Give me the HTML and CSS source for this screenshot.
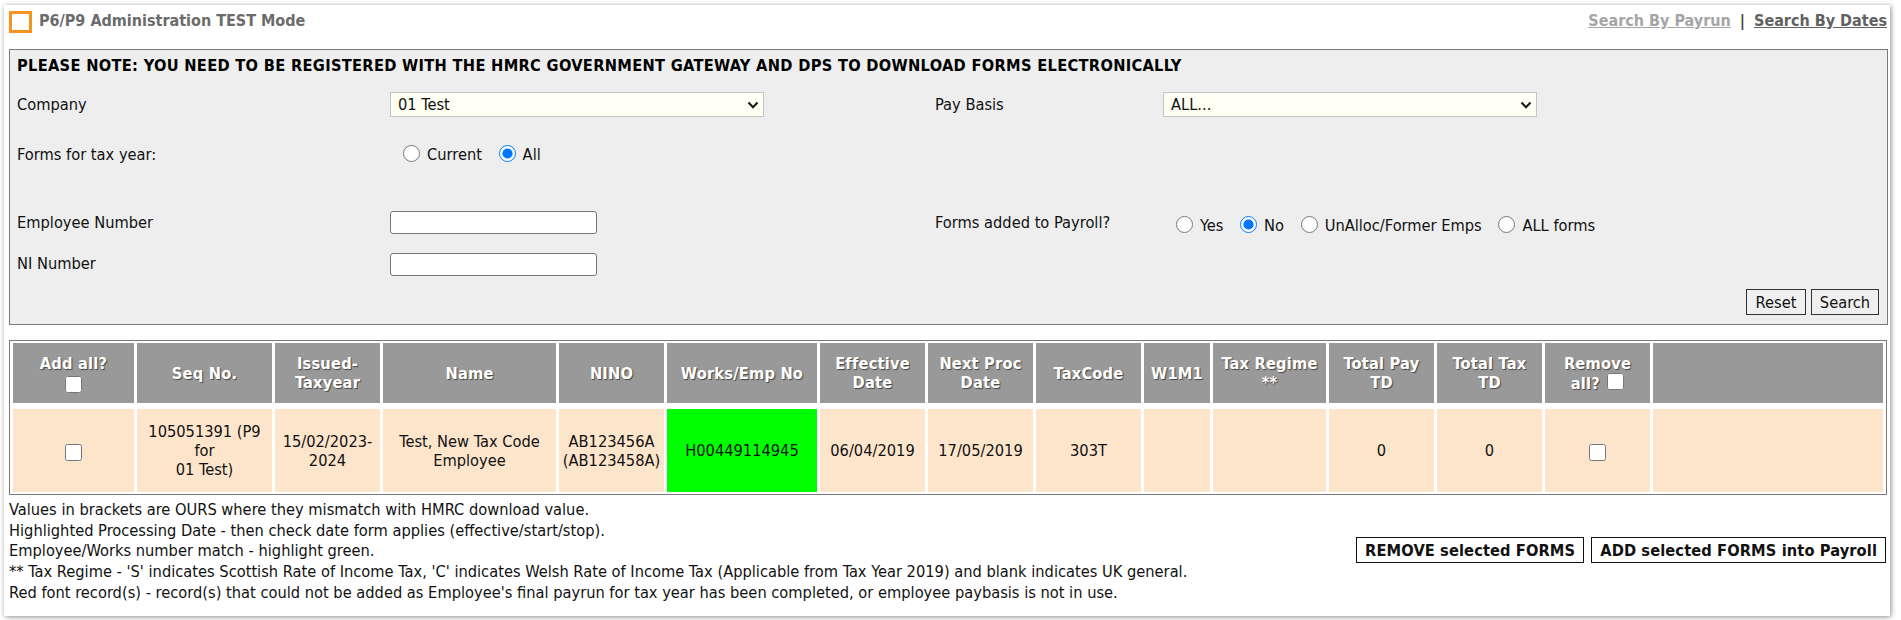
FILE: index.html
```html
<!DOCTYPE html>
<html lang="en">
<head>
<meta charset="utf-8">
<title>P6/P9 Administration TEST Mode</title>
<link rel="stylesheet" href="styles.css">
</head>
<body>
<div class="panel">
  <div class="top">
    <span class="logo-box"></span>
    <h1 class="title">P6/P9 Administration TEST Mode</h1>
    <nav class="links">
      <a href="#" class="link link-muted">Search By Payrun</a>
      <span class="sep">|</span>
      <a href="#" class="link link-dark">Search By Dates</a>
    </nav>
  </div>

  <div class="criteria">
    <p class="notice">PLEASE NOTE: YOU NEED TO BE REGISTERED WITH THE HMRC GOVERNMENT GATEWAY AND DPS TO DOWNLOAD FORMS ELECTRONICALLY</p>

    <div class="frow r-company">
      <span class="flabel">Company</span>
      <div class="fctl">
        <div class="selwrap">
          <select class="fselect"><option>01 Test</option></select>
          <svg class="chev" viewBox="0 0 12 8" width="12" height="8"><polyline points="1.5,1.5 6,6.2 10.5,1.5" fill="none" stroke="#1a1a1a" stroke-width="2.1"/></svg>
        </div>
      </div>
      <span class="flabel">Pay Basis</span>
      <div class="fctl">
        <div class="selwrap">
          <select class="fselect"><option>ALL...</option></select>
          <svg class="chev" viewBox="0 0 12 8" width="12" height="8"><polyline points="1.5,1.5 6,6.2 10.5,1.5" fill="none" stroke="#1a1a1a" stroke-width="2.1"/></svg>
        </div>
      </div>
    </div>

    <div class="frow r-year">
      <span class="flabel">Forms for tax year:</span>
      <div class="fctl radios">
        <label class="opt"><input type="radio" name="year" class="rad">Current</label>
        <label class="opt"><input type="radio" name="year" class="rad" checked>All</label>
      </div>
    </div>

    <div class="frow r-emp">
      <span class="flabel">Employee Number</span>
      <div class="fctl"><input type="text" class="ftext"></div>
      <span class="flabel">Forms added to Payroll?</span>
      <div class="fctl radios radios-low">
        <label class="opt"><input type="radio" name="added" class="rad">Yes</label>
        <label class="opt"><input type="radio" name="added" class="rad" checked>No</label>
        <label class="opt"><input type="radio" name="added" class="rad">UnAlloc/Former Emps</label>
        <label class="opt"><input type="radio" name="added" class="rad">ALL forms</label>
      </div>
    </div>

    <div class="frow r-ni">
      <span class="flabel">NI Number</span>
      <div class="fctl"><input type="text" class="ftext"></div>
    </div>

    <div class="actions">
      <button class="btn">Reset</button>
      <button class="btn">Search</button>
    </div>
  </div>

  <div class="results">
    <table class="grid">
      <thead>
        <tr>
          <th class="c-add">Add all?<br><input type="checkbox" class="chk"></th>
          <th class="c-seq">Seq No.</th>
          <th class="c-std">Issued-<br>Taxyear</th>
          <th class="c-name">Name</th>
          <th class="c-std">NINO</th>
          <th class="c-works">Works/Emp No</th>
          <th class="c-std">Effective<br>Date</th>
          <th class="c-std">Next Proc<br>Date</th>
          <th class="c-std">TaxCode</th>
          <th class="c-w1">W1M1</th>
          <th class="c-reg">Tax Regime<br>**</th>
          <th class="c-std">Total Pay<br>TD</th>
          <th class="c-std">Total Tax<br>TD</th>
          <th class="c-std">Remove<br>all? <input type="checkbox" class="chk chk-inline"></th>
          <th class="c-last"></th>
        </tr>
      </thead>
      <tbody>
        <tr>
          <td><input type="checkbox" class="chk"></td>
          <td>105051391 (P9<br>for<br>01 Test)</td>
          <td>15/02/2023-<br>2024</td>
          <td>Test, New Tax Code<br>Employee</td>
          <td>AB123456A<br>(AB123458A)</td>
          <td class="match">H00449114945</td>
          <td>06/04/2019</td>
          <td>17/05/2019</td>
          <td>303T</td>
          <td></td>
          <td></td>
          <td>0</td>
          <td>0</td>
          <td><input type="checkbox" class="chk"></td>
          <td></td>
        </tr>
      </tbody>
    </table>
  </div>

  <div class="footer">
    <div class="notes">
      <p>Values in brackets are OURS where they mismatch with HMRC download value.</p>
      <p>Highlighted Processing Date - then check date form applies (effective/start/stop).</p>
      <p>Employee/Works number match - highlight green.</p>
      <p>** Tax Regime - 'S' indicates Scottish Rate of Income Tax, 'C' indicates Welsh Rate of Income Tax (Applicable from Tax Year 2019) and blank indicates UK general.</p>
      <p>Red font record(s) - record(s) that could not be added as Employee's final payrun for tax year has been completed, or employee paybasis is not in use.</p>
    </div>
    <div class="footer-actions">
      <button class="btn btn-strong">REMOVE selected FORMS</button>
      <button class="btn btn-strong">ADD selected FORMS into Payroll</button>
    </div>
  </div>
</div>
</body>
</html>
```

FILE: styles.css
```css
* { box-sizing: border-box; }

html, body {
  margin: 0;
  padding: 0;
  background: #ffffff;
}

body {
  font-family: "DejaVu Sans Condensed", "DejaVu Sans", sans-serif;
  font-stretch: condensed;
  font-size: 16.3px;
  color: #111;
}

.panel {
  margin: 5px 11px 4px 4px;
  height: 611px;
  padding: 0 2px 0 5px;
  background: #fff;
  box-shadow: 1px 1px 5px rgba(0, 0, 0, 0.45);
}

/* ---------- title bar ---------- */
.top {
  height: 44px;
  display: flex;
  align-items: flex-start;
  padding-top: 6px;
}

.logo-box {
  width: 23px;
  height: 22px;
  border: 3px solid #f7931e;
  flex: none;
}

.title {
  margin: 0 0 0 7px;
  font-size: 16px;
  line-height: 20px;
  font-weight: bold;
  color: #6b6b6b;
}

.links {
  margin-left: auto;
  display: flex;
  gap: 9px;
  font-size: 16px;
  font-weight: bold;
  line-height: 20px;
  padding-right: 1px;
}

.link { text-decoration: underline; }
.link-muted { color: #a5a5a5; }
.link-dark { color: #616161; }
.sep { color: #444; }

/* ---------- criteria ---------- */
.criteria {
  border: 1px solid #7a7a7a;
  background: #eeeeee;
  padding: 6px 7px 9px 7px;
}

.notice {
  margin: 0;
  font-weight: bold;
  line-height: 20px;
  letter-spacing: 0.3px;
  color: #000;
}

.frow {
  display: grid;
  grid-template-columns: 373px 545px 228px 1fr;
  align-items: center;
}

.r-company { margin-top: 16px; height: 25px; }
.r-year { margin-top: 28px; height: 20px; }
.r-emp { margin-top: 43px; height: 29px; }
.r-ni { margin-top: 13px; height: 28px; }

.flabel { color: #111; line-height: 20px; }

.selwrap {
  position: relative;
  width: 374px;
  height: 25px;
}

.fselect {
  appearance: none;
  -webkit-appearance: none;
  width: 100%;
  height: 100%;
  margin: 0;
  padding: 0 0 0 7px;
  border: 1px solid #c4c4c4;
  border-radius: 0;
  background: #fffff4;
  font: inherit;
  color: #111;
}

.chev {
  position: absolute;
  right: 5px;
  top: 9px;
  pointer-events: none;
}

.ftext {
  width: 207px;
  height: 100%;
  margin: 0;
  border: 1px solid #767676;
  border-radius: 3px;
  background: #fff;
  font: inherit;
}

.radios {
  padding-left: 8px;
  line-height: 20px;
  white-space: nowrap;
}

.radios-low { padding-top: 7px; }

.opt + .opt { margin-left: 7px; }

.rad {
  width: 17px;
  height: 17px;
  margin: 0 7px 0 5px;
  vertical-align: -2px;
}

.actions {
  margin-top: 11px;
  display: flex;
  justify-content: flex-end;
  gap: 5px;
}

.btn {
  font: inherit;
  height: 26px;
  padding: 0 6px;
  border: 1px solid #333;
  background: #efefef;
  color: #111;
  border-radius: 0;
}

.actions .btn:first-child { width: 60px; }
.actions .btn:last-child { width: 68px; margin-right: 1px; }

/* ---------- results ---------- */
.results {
  margin-top: 15px;
  border: 1px solid #7a7a7a;
  margin-right: 1px;
}

.grid {
  width: 100%;
  table-layout: fixed;
  border-collapse: separate;
  border-spacing: 3px;
  margin: -1px 0 -1px 0;
}

.grid th {
  background: #999999;
  color: #fff;
  font-weight: bold;
  line-height: 19px;
  height: 63px;
  padding: 0 3px;
  border-bottom: 3px solid #fff;
  text-align: center;
  vertical-align: middle;
  letter-spacing: 0.2px;
  text-shadow: 1px 1px 1px rgba(0, 0, 0, 0.55);
}

.grid td {
  background: #fde5cc;
  text-align: center;
  vertical-align: middle;
  height: 83px;
  line-height: 19px;
  padding: 0 3px;
  color: #111;
}

.grid td.match { background: #00ff00; }

.c-add { width: 121px; }
.c-seq { width: 135px; }
.c-std { width: 105px; }
.c-name { width: 173px; }
.c-works { width: 150px; }
.c-w1 { width: 66px; }
.c-reg { width: 113px; }

.chk {
  width: 17px;
  height: 17px;
  margin: 2px 0 0 0;
  vertical-align: middle;
}

.chk-inline { margin: 0 0 2px 2px; vertical-align: -1px; }

/* ---------- footer ---------- */
.footer {
  display: flex;
  align-items: center;
  margin-top: 5px;
}

.notes {
  flex: 1;
}

.notes p {
  margin: 0;
  line-height: 20.7px;
  color: #111;
}

.footer-actions {
  display: flex;
  gap: 7px;
  margin-right: 2px;
  margin-top: -3px;
}

.btn-strong {
  background: #fff;
  border-color: #111;
  font-weight: bold;
  letter-spacing: 0.1px;
  padding: 0 8px;
}
```
